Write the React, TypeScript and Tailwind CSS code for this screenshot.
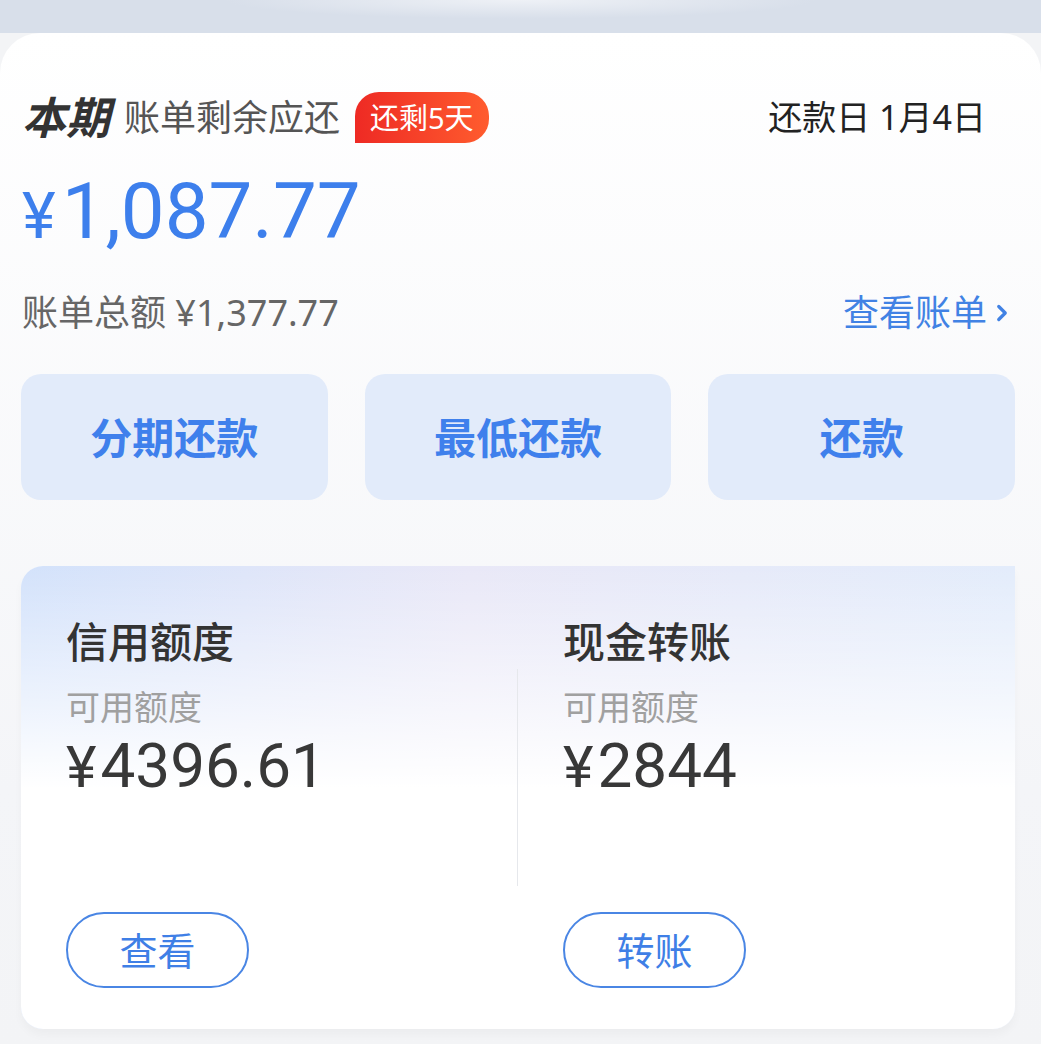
import { ChevronRight } from 'lucide-react'

const cjk = { fontFamily: '"Noto Sans", "Noto Sans CJK SC", sans-serif' }
const num = { fontFamily: 'Roboto, "Noto Sans", "Noto Sans CJK SC", sans-serif' }

function ActionButton({ label }: { label: string }) {
  return (
    <button className="h-[126px] rounded-[20px] bg-[#e2ebfa] text-[42px] font-bold text-[#3f80ec]">
      {label}
    </button>
  )
}

function LimitColumn({ title, amount, action, divider }: { title: string; amount: string; action: string; divider?: boolean }) {
  return (
    <div className="relative flex flex-col pl-[45px] pt-[50px]">
      {divider && <div className="absolute right-0 top-[103px] h-[217px] w-px bg-[#e6e8ec]" />}
      <div className="text-[42px] font-medium leading-[52px] text-[#333]">{title}</div>
      <div className="mt-[19px] text-[34px] leading-[40px] text-[#a0a0a0]">可用额度</div>
      <div className="mt-[6px] flex items-baseline text-[#383838]" style={num}>
        <span className="text-[58px] leading-[66px]">¥</span>
        <span className="ml-[4px] text-[62px] leading-[66px]">{amount}</span>
      </div>
      <button className="mt-[112px] h-[76px] w-[183px] rounded-full border-2 border-[#4a86e4] text-[38px] text-[#3f7fe6]">
        {action}
      </button>
    </div>
  )
}

export default function App() {
  return (
    <div className="h-[1044px] w-[1041px] overflow-hidden bg-[#f3f4f6]" style={cjk}>
      <div className="h-[33px] bg-[radial-gradient(ellipse_at_top,#eef1f6_0%,#d8dfea_40%)]" />
      <div className="rounded-t-[40px] bg-[linear-gradient(180deg,#ffffff_0%,#f4f5f8_75%,#f3f4f6_100%)] pb-[14px]">
        <div className="flex h-[110px] items-end justify-between pl-[22px] pr-[55px]">
          <div className="flex h-[51px] items-center">
            <span className="text-[44px] font-bold italic leading-[51px] text-[#333]">本期</span>
            <span className="ml-[14px] text-[36px] leading-[51px] text-[#555]">账单剩余应还</span>
            <span className="ml-[15px] flex h-[51px] items-center rounded-[24px] rounded-bl-none bg-[linear-gradient(90deg,#ee2a24,#ff5c2e)] px-[15px] text-[29px] leading-[51px] text-white">
              还剩5天
            </span>
          </div>
          <span className="flex h-[51px] items-center text-[34px] leading-[51px] text-[#222]">还款日 1月4日</span>
        </div>

        <div className="mt-[24px] flex items-baseline pl-[22px] text-[#3d7fec]" style={num}>
          <span className="text-[64px] leading-[90px]">¥</span>
          <span className="ml-[6px] text-[78px] leading-[90px]">1,087.77</span>
        </div>

        <div className="mt-[27px] flex h-[48px] items-center justify-between pl-[22px] pr-[26px]">
          <span className="text-[36px] leading-[48px] text-[#666]">账单总额 ¥1,377.77</span>
          <span className="flex items-center text-[36px] leading-[48px] text-[#4182e4]">
            查看账单
            <ChevronRight className="ml-[2px] h-[38px] w-[26px]" strokeWidth={3} />
          </span>
        </div>

        <div className="mt-[37px] grid grid-cols-3 gap-[37px] pl-[21px] pr-[26px]">
          <ActionButton label="分期还款" />
          <ActionButton label="最低还款" />
          <ActionButton label="还款" />
        </div>

        <div className="ml-[21px] mr-[26px] mt-[66px] h-[463px] overflow-hidden rounded-[22px] rounded-tr-none bg-white shadow-[0_6px_10px_rgba(0,0,0,0.03)]">
          <div className="grid h-full grid-cols-2 bg-[linear-gradient(180deg,rgba(255,255,255,0)_0%,rgba(255,255,255,0.6)_30%,#ffffff_48%),linear-gradient(90deg,#d3e2fb_0%,#e9e8f7_45%,#e3ecfb_100%)]">
            <LimitColumn title="信用额度" amount="4396.61" action="查看" divider />
            <LimitColumn title="现金转账" amount="2844" action="转账" />
          </div>
        </div>
      </div>
    </div>
  )
}
